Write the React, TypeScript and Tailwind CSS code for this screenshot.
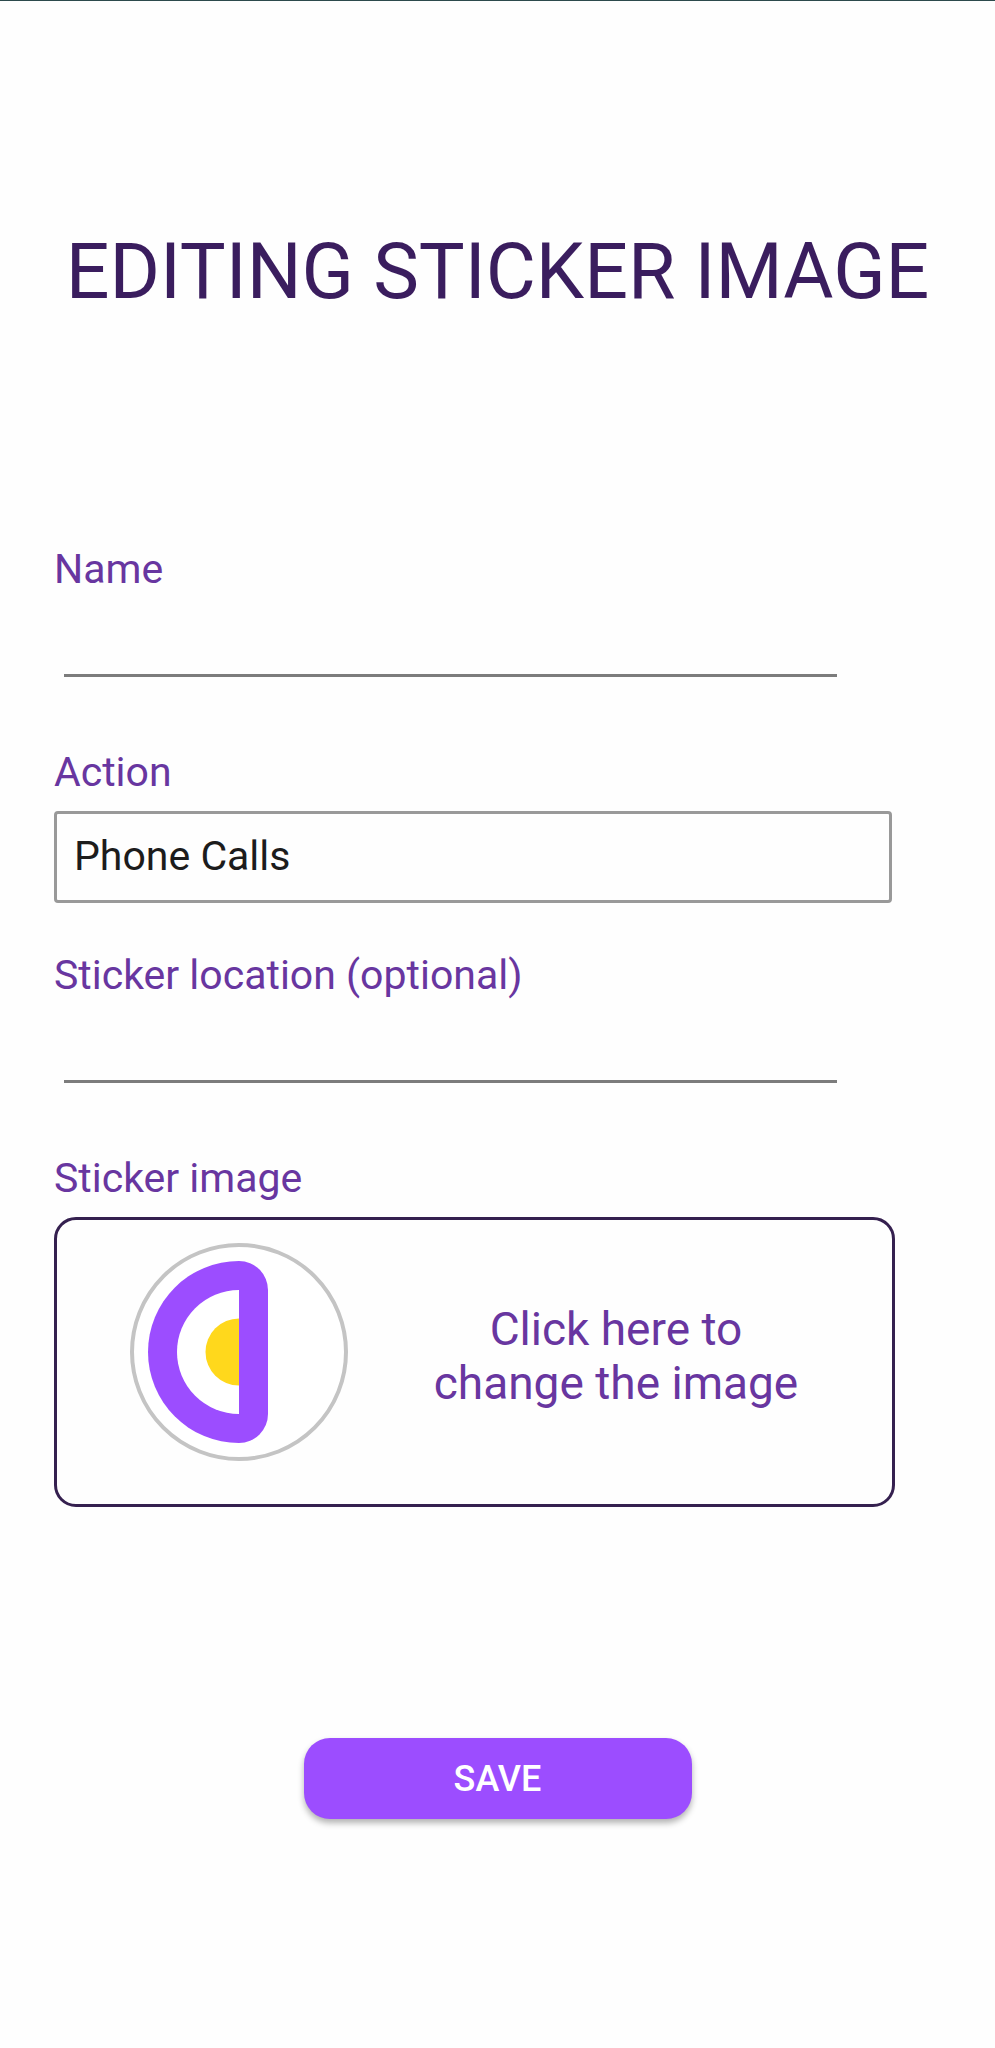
import React from "react";

const labelClass = "text-[41px] leading-[48px] text-[#6836a0]";
const lineInputClass =
  "ml-[10px] mr-[58px] h-[69px] border-b-[3px] border-[#7c7c7c] bg-transparent px-1 text-[41px] text-[#1c1c1c] outline-none";

function StickerPicture() {
  return (
    <svg viewBox="0 0 218 218" className="size-[218px] shrink-0" aria-hidden="true">
      <circle cx="109" cy="109" r="107" fill="#ffffff" stroke="#c4c4c4" strokeWidth="4" />
      <path
        d="M109 18 A91 91 0 0 0 109 200 A29 29 0 0 0 138 171 V47 A29 29 0 0 0 109 18 Z"
        fill="#9c4dff"
      />
      <path d="M109 47 A62 62 0 0 0 109 171 Z" fill="#ffffff" />
      <path d="M109 75.500 A33.500 33.500 0 0 0 109 142.500 Z" fill="#ffd81c" />
    </svg>
  );
}

export default function App() {
  return (
    <main className="min-h-screen border-t border-[#2c4a4c] bg-[#fefefe] pb-[200px] font-[Roboto,sans-serif]">
      <h1 className="pt-[225px] text-center text-[77px] leading-[92px] text-[#3a1d5e]">
        EDITING STICKER IMAGE
      </h1>
      <form className="mt-[227px] flex flex-col" onSubmit={(e) => e.preventDefault()}>
        <div className="flex flex-col gap-12 pl-[54px] pr-[100px]">
          <div className="flex flex-col gap-[15px]">
            <label htmlFor="name" className={labelClass}>
              Name
            </label>
            <input id="name" type="text" className={lineInputClass} />
            <div className="h-2" />
          </div>
          <div className="flex flex-col gap-[15px]">
            <label htmlFor="action" className={labelClass}>
              Action
            </label>
            <select
              id="action"
              className="mr-[3px] h-[92px] appearance-none rounded-[4px] border-[3px] border-[#999999] bg-transparent px-[17px] text-[41px] text-[#1c1c1c]"
            >
              <option>Phone Calls</option>
            </select>
          </div>
          <div className="flex flex-col gap-[15px]">
            <label htmlFor="location" className={labelClass}>
              Sticker location (optional)
            </label>
            <input id="location" type="text" className={lineInputClass} />
            <div className="h-2" />
          </div>
          <div className="flex flex-col gap-[15px]">
            <label htmlFor="image" className={labelClass}>
              Sticker image
            </label>
            <button
              id="image"
              type="button"
              className="flex h-[290px] items-start rounded-[22px] border-[3px] border-[#35204f] pl-[73px] pt-[23px]"
            >
              <StickerPicture />
              <span className="flex-1 self-center pb-9 pr-2 text-center text-[46px] leading-[54px] text-[#6836a0]">
                Click here to
                <br />
                change the image
              </span>
            </button>
          </div>
        </div>
        <button
          type="submit"
          className="mt-[231px] h-[81px] w-[388px] self-center rounded-[26px] bg-[#9c4dff] text-[36px] font-medium text-white shadow-[0_4px_6px_rgba(0,0,0,0.3)]"
        >
          SAVE
        </button>
      </form>
    </main>
  );
}
